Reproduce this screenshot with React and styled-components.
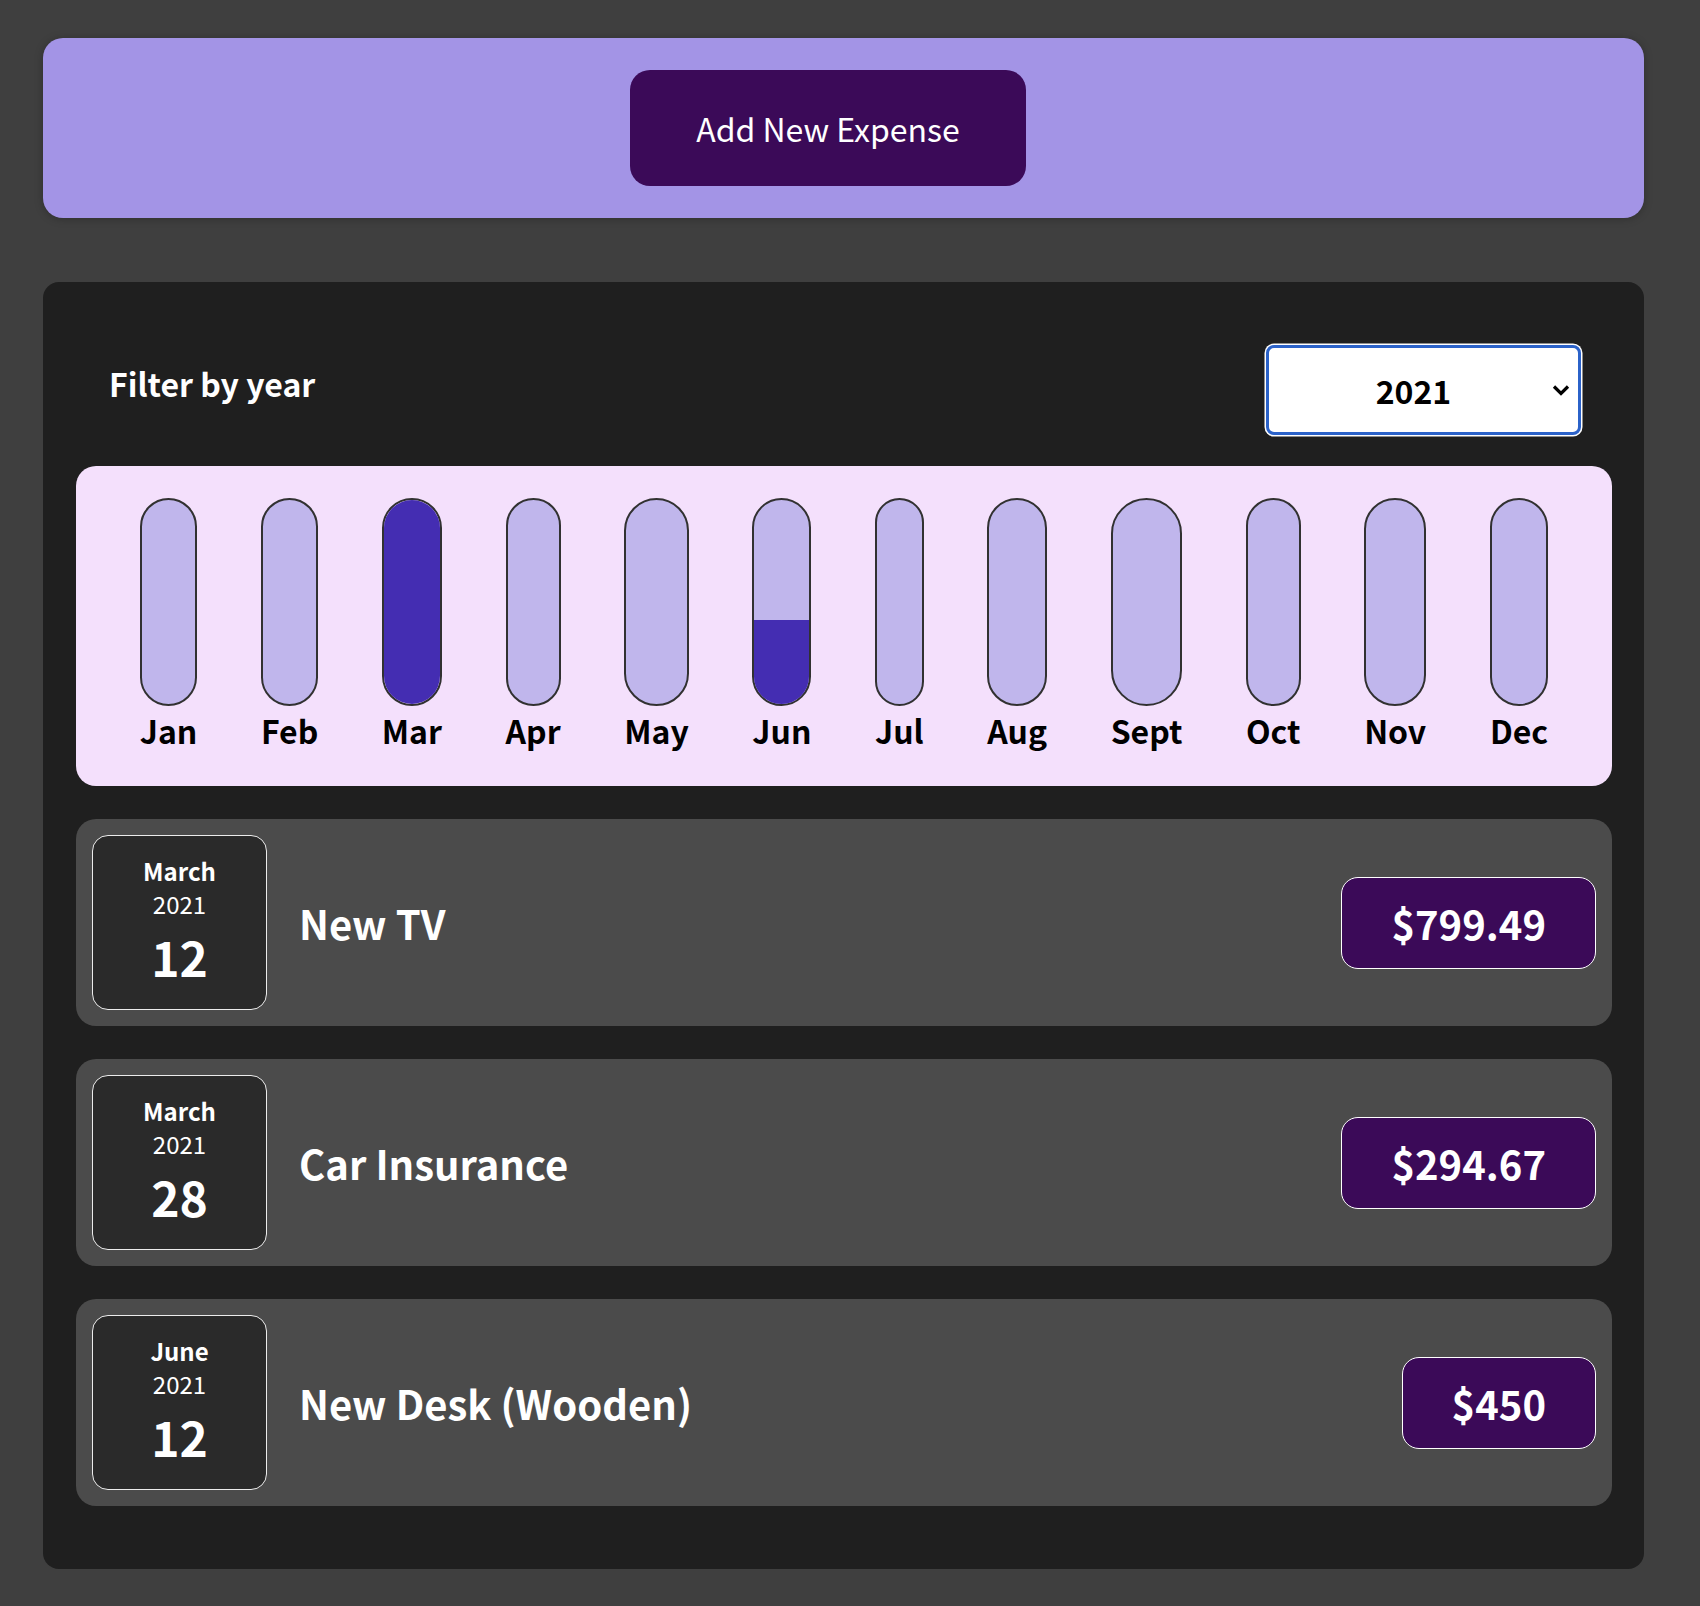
import styled, { createGlobalStyle } from "styled-components";
import { useState } from "react";

const GlobalStyle = createGlobalStyle`
  * { box-sizing: border-box; }
  body {
    margin: 0;
    background-color: #3f3f3f;
    font-family: "Noto Sans CJK JP", "Noto Sans", sans-serif;
  }
`;

const Page = styled.div`
  padding: 38px 56px 37px 43px;
  display: flex;
  flex-direction: column;
  gap: 64px;
`;

const NewExpensePanel = styled.div`
  background-color: #a394e6;
  border-radius: 20px;
  box-shadow: 0 1px 8px rgba(0, 0, 0, 0.25);
  padding: 32px 47px 32px 16px;
  display: flex;
  justify-content: center;
`;

const AddButton = styled.button`
  width: 396px;
  height: 116px;
  border: none;
  border-radius: 20px;
  background-color: #3b0a58;
  color: #fff;
  font-family: inherit;
  font-size: 32px;
  cursor: pointer;
`;

const ExpensesPanel = styled.div`
  background-color: #1f1f1f;
  border-radius: 16px;
  padding: 33px 32px 63px 33px;
`;

const FilterRow = styled.div`
  display: flex;
  justify-content: space-between;
  align-items: center;
  padding: 30px 31px 31px 33px;
`;

const FilterLabel = styled.label`
  color: #fff;
  font-weight: 700;
  font-size: 32px;
  padding-bottom: 14px;
`;

const SelectWrap = styled.div`
  position: relative;
  width: 315px;
  height: 90px;
`;

const YearSelect = styled.select`
  appearance: none;
  width: 100%;
  height: 100%;
  border: 3px solid #2b62c9;
  box-shadow: 0 0 0 1.5px #fff;
  border-radius: 8px;
  background-color: #fff;
  font-family: inherit;
  font-size: 32px;
  font-weight: 700;
  text-align: center;
  text-align-last: center;
  color: #000;
  padding: 0 20px 0 0;
  outline: none;
`;

const Chevron = styled.svg`
  position: absolute;
  right: 10px;
  top: 50%;
  transform: translateY(-50%);
  width: 20px;
  height: 14px;
  pointer-events: none;
`;

const Chart = styled.div`
  background-color: #f4e0fc;
  border-radius: 20px;
  padding: 32px;
  height: 320px;
  display: flex;
  justify-content: space-around;
`;

const Bar = styled.div`
  height: 100%;
  display: flex;
  flex-direction: column;
  align-items: center;
`;

const BarInner = styled.div`
  flex: 1;
  width: 100%;
  border: 2px solid #313131;
  border-radius: 999px;
  background-color: #c0b6ec;
  overflow: hidden;
  display: flex;
  flex-direction: column;
  justify-content: flex-end;
`;

const BarFill = styled.div`
  width: 100%;
  background-color: #442db2;
`;

const BarLabel = styled.div`
  font-weight: 700;
  font-size: 32px;
  line-height: 48px;
  color: #000;
`;

const List = styled.ul`
  list-style: none;
  margin: 33px 0 0;
  padding: 0;
  display: flex;
  flex-direction: column;
  gap: 33px;
`;

const Item = styled.li`
  background-color: #4b4b4b;
  border-radius: 20px;
  padding: 16px;
  display: flex;
  align-items: center;
`;

const DateBox = styled.div`
  width: 175px;
  height: 175px;
  border: 1.5px solid #ececec;
  border-radius: 16px;
  background-color: #2a2a2a;
  color: #fff;
  padding-top: 20px;
  display: flex;
  flex-direction: column;
  align-items: center;
  flex-shrink: 0;
`;

const DateMonth = styled.div`
  font-size: 24px;
  font-weight: 700;
  line-height: 30px;
`;

const DateYear = styled.div`
  font-size: 24px;
  line-height: 35px;
`;

const DateDay = styled.div`
  font-size: 48px;
  font-weight: 700;
  line-height: 70px;
`;

const Title = styled.h2`
  flex: 1;
  margin: 0 0 0 32px;
  color: #fff;
  font-size: 40px;
  font-weight: 700;
`;

const Price = styled.div`
  height: 92px;
  padding: 0 49px;
  display: flex;
  align-items: center;
  border: 1.5px solid #fff;
  border-radius: 17px;
  background-color: #3b0a58;
  color: #fff;
  font-size: 40px;
  font-weight: 700;
`;

const expenses = [
  { id: "e1", title: "New TV", amount: 799.49, date: new Date(2021, 2, 12) },
  { id: "e2", title: "Car Insurance", amount: 294.67, date: new Date(2021, 2, 28) },
  { id: "e3", title: "New Desk (Wooden)", amount: 450, date: new Date(2021, 5, 12) },
];

const months = ["Jan", "Feb", "Mar", "Apr", "May", "Jun", "Jul", "Aug", "Sept", "Oct", "Nov", "Dec"];

function App() {
  const [year, setYear] = useState("2021");
  const filtered = expenses.filter(e => e.date.getFullYear().toString() === year);

  const totals = months.map(() => 0);
  filtered.forEach(e => { totals[e.date.getMonth()] += e.amount; });
  const max = Math.max(...totals);

  return (
    <>
      <GlobalStyle />
      <Page>
        <NewExpensePanel>
          <AddButton type="button">Add New Expense</AddButton>
        </NewExpensePanel>

        <ExpensesPanel>
          <FilterRow>
            <FilterLabel>Filter by year</FilterLabel>
            <SelectWrap>
              <YearSelect value={year} onChange={e => setYear(e.target.value)}>
                <option value="2022">2022</option>
                <option value="2021">2021</option>
                <option value="2020">2020</option>
                <option value="2019">2019</option>
              </YearSelect>
              <Chevron viewBox="0 0 20 14">
                <path d="M3 3.5 L10 10.5 L17 3.5" fill="none" stroke="#000" strokeWidth="3.2" />
              </Chevron>
            </SelectWrap>
          </FilterRow>

          <Chart>
            {months.map((m, i) => (
              <Bar key={m}>
                <BarInner>
                  <BarFill style={{ height: max > 0 ? `${Math.round((totals[i] / max) * 100)}%` : "0%" }} />
                </BarInner>
                <BarLabel>{m}</BarLabel>
              </Bar>
            ))}
          </Chart>

          <List>
            {filtered.map(e => (
              <Item key={e.id}>
                <DateBox>
                  <DateMonth>{e.date.toLocaleString("en-US", { month: "long" })}</DateMonth>
                  <DateYear>{e.date.getFullYear()}</DateYear>
                  <DateDay>{e.date.toLocaleString("en-US", { day: "2-digit" })}</DateDay>
                </DateBox>
                <Title>{e.title}</Title>
                <Price>${e.amount}</Price>
              </Item>
            ))}
          </List>
        </ExpensesPanel>
      </Page>
    </>
  );
}

export default App;
